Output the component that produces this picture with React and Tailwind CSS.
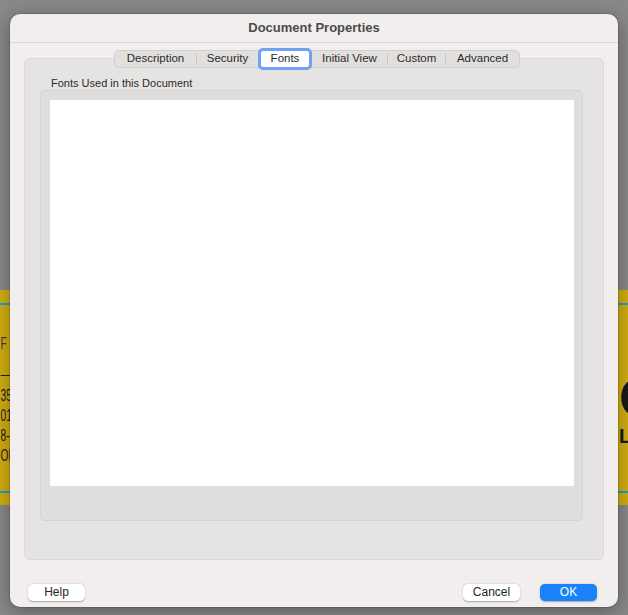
import React from "react";

const tabs = ["Description", "Security", "Fonts", "Initial View", "Custom", "Advanced"];
const tabWidths = [81, 61, 54, 75, 57, 73];

const Button = ({ label, primary, width }) => (
  <button
    className={`h-[17px] rounded-[5px] text-[12px] leading-[17px] shadow-[0_0.5px_1.5px_rgba(0,0,0,0.3)] ${
      primary ? "bg-[#1a83fc] text-white" : "bg-white text-[#262626]"
    }`}
    style={{ width }}
  >
    {label}
  </button>
);

const App = () => {
  return (
    <div
      className="relative w-[628px] h-[615px] overflow-hidden bg-[#898989]"
      style={{ fontFamily: "'Liberation Sans', Arial, sans-serif" }}
    >
      {/* yellow document behind the dialog */}
      <div className="absolute left-0 right-0 top-[290px] h-[215px] bg-[#d2ae12]">
        <div className="mt-[13px] h-[2px] bg-[#1aa3c9]" />
        <div className="flex justify-between">
          <div className="pl-[1px] text-[#1a1a1a] text-[17px] leading-[20px] origin-left scale-x-[0.6]">
            <div className="mt-[29px] text-[#3a3a3a]">F</div>
            <div className="mt-[21px] w-[16px] h-[1px] bg-[#222]" />
            <div className="mt-[10px]">35</div>
            <div>01</div>
            <div>8-</div>
            <div>OM</div>
          </div>
          <div className="text-[#1a1a1a] font-bold">
            <div className="mt-[65px] text-[54px] leading-[54px] -mr-[30px]">C</div>
            <div className="mt-[2px] text-[20px] leading-[20px] -mr-[4px]">L</div>
          </div>
        </div>
        <div className="absolute left-0 right-0 top-[201px] h-[2px] bg-[#1aa3c9]" />
      </div>

      {/* dialog */}
      <div className="absolute left-[10px] top-[14px] w-[608px] h-[593px] rounded-[10px] bg-[#f1eeed] shadow-[0_0_0_0.5px_rgba(0,0,0,0.25),0_4px_20px_rgba(0,0,0,0.35)] flex flex-col">
        <div className="h-[29px] flex items-center justify-center border-b border-[#dad7d5] text-[13px] font-bold text-[#4b4b4b]">
          Document Properties
        </div>

        <div className="relative mx-[14px] mt-[15px] h-[502px] rounded-[6px] bg-[#e6e4e2] border border-[#dbd9d7]">
          <div className="absolute -top-[9px] left-[89px] flex items-center h-[18px] rounded-[5px] bg-[#e2e0de] border border-[#d3d1cf] text-[11.5px] text-[#2b2b2b]">
            {tabs.map((t, i) => {
              const active = t === "Fonts";
              const prevActive = tabs[i - 1] === "Fonts";
              return (
                <div key={t} className="flex items-center h-full">
                  {i > 0 && !active && !prevActive && <div className="w-[1px] h-[10px] bg-[#c9c7c5]" />}
                  {active ? (
                    <div
                      className="h-[22px] -my-[2px] flex items-center justify-center rounded-[5px] bg-white border-[3px] border-[#6fa2f2]"
                      style={{ width: tabWidths[i] }}
                    >
                      {t}
                    </div>
                  ) : (
                    <div className="flex items-center justify-center" style={{ width: tabWidths[i] }}>
                      {t}
                    </div>
                  )}
                </div>
              );
            })}
          </div>

          <div className="pl-[26px] pt-[17px] h-[31px] text-[11px] leading-[14px] text-[#2a2a2a]">
            Fonts Used in this Document
          </div>
          <div className="ml-[15px] w-[543px] h-[431px] rounded-[5px] bg-[#dfdedc] border border-[#d6d4d2] p-[9px]">
            <div className="w-[524px] h-[386px] bg-white" />
          </div>
        </div>

        <div className="flex items-center pl-[18px] pr-[21px] mt-[24px]">
          <Button label="Help" width={57} />
          <div className="flex-1" />
          <Button label="Cancel" width={57} />
          <div className="w-[20px]" />
          <Button label="OK" width={57} primary />
        </div>
      </div>
    </div>
  );
};

export default App;
